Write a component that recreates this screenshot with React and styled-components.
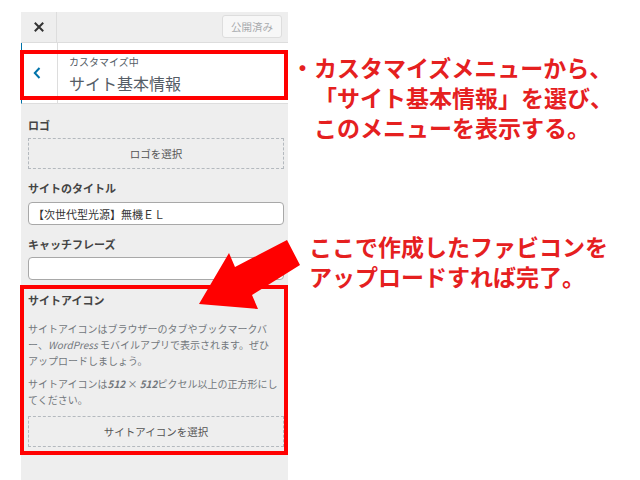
import React from 'react';
import styled, { createGlobalStyle } from 'styled-components';

const Global = createGlobalStyle`
  html, body { margin: 0; padding: 0; background: #fff; }
  body { font-family: "Noto Sans CJK JP", "Noto Sans", sans-serif; }
  * { box-sizing: border-box; }
`;

const Page = styled.div`
  position: relative;
  width: 640px;
  height: 480px;
  overflow: hidden;
  display: flex;
  align-items: flex-start;
`;

const Panel = styled.div`
  margin: 12px 0 0 21px;
  width: 267px;
  height: 468px;
  flex-shrink: 0;
  background: #eeeeee;
  display: flex;
  flex-direction: column;
`;

const TopBar = styled.div`
  height: 31px;
  border-bottom: 1px solid #dddddd;
  display: flex;
  justify-content: space-between;
  align-items: flex-start;
`;

const CloseButton = styled.div`
  width: 36px;
  height: 30px;
  border-right: 1px solid #dddddd;
  display: flex;
  align-items: center;
  justify-content: center;
`;

const PublishButton = styled.div`
  margin: 3px 6px 0 0;
  width: 60px;
  height: 23px;
  border: 1px solid #dddddd;
  border-radius: 3px;
  background: #f7f7f7;
  color: #a7aaad;
  font-size: 10.5px;
  display: flex;
  align-items: center;
  justify-content: center;
`;

const Header = styled.div`
  height: 61px;
  background: #ffffff;
  border-left: 1px solid #0073aa;
  border-bottom: 1px solid #dddddd;
  display: flex;
`;

const BackButton = styled.div`
  width: 36px;
  border-right: 1px solid #dddddd;
  display: flex;
  align-items: center;
  padding: 0 0 1px 11px;
`;

const TitleBlock = styled.div`
  padding: 12px 0 0 11px;
  display: flex;
  flex-direction: column;
  color: #555d66;
`;

const Overline = styled.span`
  font-size: 10px;
  line-height: 14px;
`;

const Title = styled.span`
  margin-top: 3px;
  font-size: 16px;
  line-height: 22px;
`;

const Content = styled.div`
  padding: 13px 4px 0 7px;
  display: flex;
  flex-direction: column;
`;

const Section = styled.div`
  margin-top: ${p => p.$top || 0}px;
  display: flex;
  flex-direction: column;
`;

const Label = styled.div`
  font-size: 11px;
  font-weight: 700;
  line-height: 16px;
  color: #444444;
`;

const DashedButton = styled.div`
  margin-top: ${p => p.$top}px;
  height: 31px;
  border: 1px dashed #b4b9be;
  display: flex;
  align-items: center;
  justify-content: center;
  font-size: 10.5px;
  color: #555555;
`;

const TextInput = styled.input`
  margin-top: ${p => p.$top}px;
  height: 23px;
  width: 100%;
  border: 1px solid #a8a8a8;
  border-radius: 4px;
  background: #ffffff;
  padding: 0 4px;
  font-family: "Noto Sans CJK JP", sans-serif;
  font-size: 11px;
  color: #333333;
  outline: none;
`;

const Desc = styled.p`
  margin: ${p => p.$top}px 0 0;
  font-size: 10px;
  line-height: 16px;
  color: #72777c;
  em { font-style: italic; }
  strong { font-style: italic; font-weight: 700; }
`;

const Annotations = styled.div`
  margin-left: 3px;
  padding-top: 52px;
  display: flex;
  flex-direction: column;
  color: #e5201f;
  font-size: 23px;
  font-weight: 700;
  line-height: 30px;
  white-space: nowrap;
`;

const Note = styled.div`
  display: flex;
  margin: ${p => p.$top || 0}px 0 0 ${p => p.$left || 0}px;
`;

const Bullet = styled.span`
  width: 23px;
  flex-shrink: 0;
`;

const RedFrame = styled.div`
  position: absolute;
  left: 20px;
  top: ${p => p.$top}px;
  width: 268px;
  height: ${p => p.$height}px;
  border: 4px solid #ff0000;
  pointer-events: none;
`;

const Arrow = styled.svg`
  position: absolute;
  left: 190px;
  top: 230px;
`;

export default function App() {
  return (
    <>
      <Global />
      <Page>
        <Panel>
          <TopBar>
            <CloseButton>
              <svg width="10" height="10" viewBox="0 0 10 10">
                <path d="M1.5 1.5 L8.5 8.5 M8.5 1.5 L1.5 8.5" stroke="#333" strokeWidth="2" strokeLinecap="square" />
              </svg>
            </CloseButton>
            <PublishButton>公開済み</PublishButton>
          </TopBar>
          <Header>
            <BackButton>
              <svg width="8" height="12" viewBox="0 0 8 12">
                <path d="M6.5 1 L1.8 6 L6.5 11" stroke="#0073aa" strokeWidth="2" fill="none" />
              </svg>
            </BackButton>
            <TitleBlock>
              <Overline>カスタマイズ中</Overline>
              <Title>サイト基本情報</Title>
            </TitleBlock>
          </Header>
          <Content>
            <Section>
              <Label>ロゴ</Label>
              <DashedButton $top={5}>ロゴを選択</DashedButton>
            </Section>
            <Section $top={11}>
              <Label>サイトのタイトル</Label>
              <TextInput $top={6} defaultValue="【次世代型光源】無機ＥＬ" readOnly />
            </Section>
            <Section $top={11}>
              <Label>キャッチフレーズ</Label>
              <TextInput $top={5} defaultValue="" readOnly />
            </Section>
            <Section $top={12}>
              <Label>サイトアイコン</Label>
              <Desc $top={13}>
                サイトアイコンはブラウザーのタブやブックマークバー、<em>WordPress</em> モバイルアプリで表示されます。ぜひ<br />アップロードしましょう。
              </Desc>
              <Desc $top={7}>
                サイトアイコンは<strong>512</strong> × <strong>512</strong>ピクセル以上の正方形にしてください。
              </Desc>
              <DashedButton $top={8}>サイトアイコンを選択</DashedButton>
            </Section>
          </Content>
        </Panel>
        <Annotations>
          <Note>
            <Bullet>・</Bullet>
            <div>
              カスタマイズメニューから、<br />
              「サイト基本情報」を選び、<br />
              このメニューを表示する。
            </div>
          </Note>
          <Note $top={89} $left={18}>
            <div>
              ここで作成したファビコンを<br />
              アップロードすれば完了。
            </div>
          </Note>
        </Annotations>
        <RedFrame $top={50} $height={50} />
        <RedFrame $top={285} $height={170} />
        <Arrow width="120" height="90" viewBox="0 0 120 90">
          <polygon points="9,74 39,23 45,37 97,10 110,35 62,65 68,79" fill="#ff0000" />
        </Arrow>
      </Page>
    </>
  );
}
